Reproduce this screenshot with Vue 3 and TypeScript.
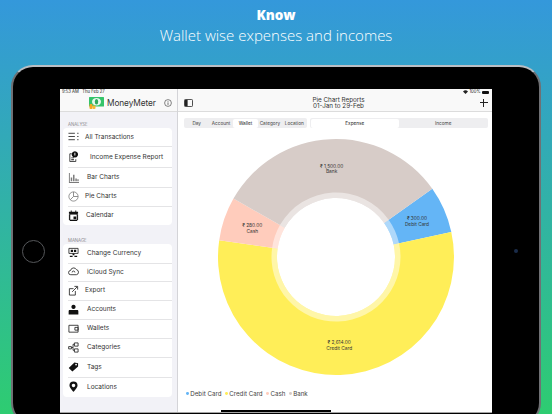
<script setup lang="ts">
import {computed} from 'vue';

interface MenuRow {
  label: string;
  height: number;
  iconWidth: number;
  line?: string;
  solid?: string;
  muted?: boolean;
}

const CX = 158;
const CY = 129;
const OUTER = 118;
const INNER = 59;
const RING = 64.5;
const LABEL_R = 88.5;
const START = -35.3;

const wallets = [
  {name: 'Debit Card', value: 300, amount: '₹ 300.00', color: '#64b5f6'},
  {name: 'Credit Card', value: 2614, amount: '₹ 2,614.00', color: '#ffee58'},
  {name: 'Cash', value: 280, amount: '₹ 280.00', color: '#ffccbc'},
  {name: 'Bank', value: 1500, amount: '₹ 1,500.00', color: '#d7ccc8'},
];

function point(r: number, deg: number) {
  const a = (deg * Math.PI) / 180;
  return `${(CX + r * Math.cos(a)).toFixed(2)} ${(CY + r * Math.sin(a)).toFixed(2)}`;
}

function arc(r1: number, r2: number, from: number, to: number) {
  const large = to - from > 180 ? 1 : 0;
  return `M${point(r2, from)}A${r2} ${r2} 0 ${large} 1 ${point(r2, to)}L${point(r1, to)}A${r1} ${r1} 0 ${large} 0 ${point(r1, from)}Z`;
}

const slices = computed(() => {
  const total = wallets.reduce((sum, w) => sum + w.value, 0);
  let angle = START;
  return wallets.map(w => {
    const from = angle;
    const to = angle + (w.value / total) * 360;
    angle = to;
    const mid = ((from + to) / 2) * Math.PI / 180;
    return {
      ...w,
      d: arc(INNER, OUTER, from, to),
      ring: arc(INNER, RING, from, to),
      x: CX + LABEL_R * Math.cos(mid),
      y: CY + LABEL_R * Math.sin(mid),
    };
  });
});

const analyse: MenuRow[] = [
  {label: 'All Transactions', height: 19, iconWidth: 17, line: 'M.5 2.5h7M.5 6h7M.5 9.5h7M10 2.5h1.5M10 6h1.5M10 9.5h1.5'},
  {label: 'Income Expense Report', height: 21, iconWidth: 22, line: 'M2 3v8.5h6.5V9M2 3h2', solid: 'M7.5.3a3.4 3.4 0 1 0 .01 0zM7 2h1v3H7zM3.5 7h3v1h-3zM3.5 9h3v1h-3z'},
  {label: 'Bar Charts', height: 20, iconWidth: 19, muted: true, solid: 'M1 1h1v10h10v1H1zM3 6h1.6v4H3zM5.5 3h1.6v7H5.5zM8 7h1.6v3H8zM10.2 8h1.4v2h-1.4z'},
  {label: 'Pie Charts', height: 18.5, iconWidth: 17, muted: true, line: 'M6 1a5 5 0 1 0 .01 0zM6 1v5L2.5 9.5M6 6h5'},
  {label: 'Calendar', height: 18.5, iconWidth: 18, line: 'M2 4h8v7H2z', solid: 'M1 2h10v3H1zM3 .5h1V2H3zM8 .5h1V2H8zM1 4h1v8H1zM10 4h1v8h-1zM1 11h10v1H1zM6 7h3v3H6z'},
];

const manage: MenuRow[] = [
  {label: 'Change Currency', height: 19.5, iconWidth: 19, line: 'M1 1.5h10v5.5H1z', solid: 'M3 3h2.5v2.5H3zM6.5 3H9v2.5H6.5zM5 7h2v2H5zM2 9.5h3V11H2zM7 9.5h3V11H7z'},
  {label: 'iCloud Sync', height: 18.5, iconWidth: 19, line: 'M3 9.5a2.3 2.3 0 0 1-.2-4.6A3.4 3.4 0 0 1 9.2 4a2.8 2.8 0 0 1 0 5.5zM4.5 7a1.5 1.5 0 0 1 3 0'},
  {label: 'Export', height: 18.5, iconWidth: 17, line: 'M8 6.5V11H1.5V4H6M4.5 7.5 10 2M7 1.5h3.5V5'},
  {label: 'Accounts', height: 19, iconWidth: 19, solid: 'M6 .8a2.3 2.3 0 1 0 .01 0zM2 6.5h8c.8 0 1.3.6 1.3 1.4v3.6H.7V7.9c0-.8.5-1.4 1.3-1.4z'},
  {label: 'Wallets', height: 19, iconWidth: 19, line: 'M1 2.5h10v7.5H1zM7.5 4.8H11v3H7.5z'},
  {label: 'Categories', height: 19.5, iconWidth: 19, line: 'M.7 5h3v2.5h-3zM7 1h4v3.5H7zM7 7.5h4V11H7zM3.7 6H5.5V2.5H7M5.5 6v3H7'},
  {label: 'Tags', height: 19.5, iconWidth: 19, solid: 'M7 1.5 11 2.5 11 6 4.8 11.5 .8 7.5ZM8.8 3a.9.9 0 1 0 .01 0z'},
  {label: 'Locations', height: 19, iconWidth: 19, solid: 'M6 .5a4.4 4.4 0 0 1 4.4 4.4C10.4 7.5 6 11.8 6 11.8S1.6 7.5 1.6 4.900A4.400 4.400 0 0 1 6 .5zM6 3a1.900 1.900 0 1 0 .01 0z'},
];

const periods = ['Day', 'Account', 'Wallet', 'Category', 'Location'];
</script>

<template>
  <div class="page">
    <header class="promo">
      <h1>Know</h1>
      <p>Wallet wise expenses and incomes</p>
    </header>

    <div class="device">
      <span class="home-button"></span>
      <span class="camera"></span>

      <div class="screen">
        <aside class="sidebar">
          <div class="status">9:53 AM&nbsp;&nbsp;&nbsp;Thu Feb 27</div>
          <div class="side-nav">
            <svg class="logo" viewBox="0 0 15 12">
              <rect y="0" width="15" height="9.500" rx="0.500" fill="#35c46a"/>
              <ellipse cx="7.500" cy="4.700" rx="4.500" ry="3.800" fill="#e8f8ec"/>
              <ellipse cx="7.500" cy="4.700" rx="1.700" ry="2.800" fill="#2fa85c"/>
              <rect x="0.500" y="7" width="3" height="5" rx="1" fill="#f5a623"/>
              <rect x="3.500" y="8.500" width="3" height="3.500" rx="1" fill="#f7b733"/>
            </svg>
            <span class="brand">MoneyMeter</span>
            <svg class="info" viewBox="0 0 8 8">
              <circle cx="4" cy="4" r="3.400" fill="none" stroke="#333" stroke-width="0.600"/>
              <path d="M4 3.400v2.500M4 2v.7" stroke="#333" stroke-width="0.700"/>
            </svg>
          </div>

          <div class="section-label first">ANALYSE</div>
          <ul class="card">
            <li v-for="row in analyse" :key="row.label" :style="{height: row.height + 'px'}">
              <span class="row-icon" :style="{width: row.iconWidth + 'px'}">
                <svg viewBox="0 0 12 12" :class="{muted: row.muted}">
                  <path v-if="row.line" class="stroke" :d="row.line"/>
                  <path v-if="row.solid" class="fill" :d="row.solid"/>
                </svg>
              </span>
              <span>{{ row.label }}</span>
            </li>
          </ul>

          <div class="section-label">MANAGE</div>
          <ul class="card">
            <li v-for="row in manage" :key="row.label" :style="{height: row.height + 'px'}">
              <span class="row-icon" :style="{width: row.iconWidth + 'px'}">
                <svg viewBox="0 0 12 12">
                  <path v-if="row.line" class="stroke" :d="row.line"/>
                  <path v-if="row.solid" class="fill" :d="row.solid"/>
                </svg>
              </span>
              <span>{{ row.label }}</span>
            </li>
          </ul>
        </aside>

        <main class="main">
          <div class="status right">
            <svg viewBox="0 0 8 6" class="wifi"><path d="M4 6 0 2a5.700 5.700 0 0 1 8 0z" fill="#222"/></svg>
            <span>100%</span>
            <i class="battery"></i>
          </div>
          <div class="main-nav">
            <svg class="panel-icon" viewBox="0 0 10 9">
              <rect x="0.500" y="0.500" width="9" height="8" rx="1" fill="none" stroke="#222" stroke-width="0.900"/>
              <rect x="1" y="1" width="3" height="7" fill="#222"/>
            </svg>
            <div class="title">
              <div>Pie Chart Reports</div>
              <div>01-Jan to 29-Feb</div>
            </div>
            <span class="plus"></span>
          </div>

          <div class="filters">
            <div class="segmented five">
              <span v-for="p in periods" :key="p" :class="{active: p === 'Wallet'}">{{ p }}</span>
            </div>
            <div class="segmented two">
              <span class="active">Expense</span>
              <span>Income</span>
            </div>
          </div>

          <svg class="chart" viewBox="0 0 314 258">
            <g v-for="s in slices" :key="s.name">
              <path :d="s.d" :fill="s.color"/>
              <path :d="s.ring" fill="#fff" fill-opacity="0.480"/>
              <text :x="s.x" :y="s.y - 1" text-anchor="middle">{{ s.amount }}</text>
              <text :x="s.x" :y="s.y + 4.600" text-anchor="middle">{{ s.name }}</text>
            </g>
          </svg>

          <div class="legend">
            <span v-for="s in slices" :key="s.name">
              <i :style="{background: s.color}"></i>{{ s.name }}
            </span>
          </div>
          <div class="home-bar"></div>
        </main>
      </div>
    </div>
  </div>
</template>

<style>
html, body {
  margin: 0;
  overflow: hidden;
}
</style>

<style scoped>
.page {
  width: 552px;
  height: 414px;
  overflow: hidden;
  background: linear-gradient(180deg, #3498db 0%, #2ecc71 100%);
  font-family: Inter, "Liberation Sans", sans-serif;
  color: #222;
}

.promo {
  height: 65px;
  padding-top: 6px;
  box-sizing: border-box;
  text-align: center;
  color: #fff;
  font-family: "Open Sans", sans-serif;
}

.promo h1 {
  margin: 0;
  font-size: 13.500px;
  line-height: 18px;
  font-weight: 800;
}

.promo p {
  margin: 1px 0 0;
  font-size: 15px;
  line-height: 20px;
  font-weight: 300;
}

.device {
  position: relative;
  box-sizing: border-box;
  height: 360px;
  margin: 0 11px;
  padding: 22px 47px 0;
  background: #000;
  border: 2px solid #6f7074;
  border-top-color: #b9bec3;
  border-radius: 22px;
}

.home-button {
  position: absolute;
  left: 9px;
  top: 173px;
  width: 21px;
  height: 21px;
  border: 1px solid #55575a;
  border-radius: 50%;
}

.camera {
  position: absolute;
  left: 501px;
  top: 182px;
  width: 4px;
  height: 4px;
  border-radius: 50%;
  background: #1a2c4a;
}

.screen {
  display: flex;
  height: 324px;
  overflow: hidden;
  border-bottom: 1px solid #a5a5a5;
  box-sizing: border-box;
}

.sidebar {
  width: 118px;
  flex: none;
  background: #f2f2f7;
  border-right: 1px solid #d4d4d8;
  box-sizing: border-box;
}

.status {
  height: 6px;
  padding-left: 2px;
  background: #f9f9f9;
  font-size: 4.200px;
  line-height: 6px;
  white-space: nowrap;
}

.status.right {
  display: flex;
  align-items: center;
  justify-content: flex-end;
  gap: 1.500px;
  padding-right: 3px;
}

.wifi {
  width: 5px;
  height: 4px;
}

.battery {
  width: 7px;
  height: 3px;
  background: #111;
  border-radius: 1px;
}

.side-nav {
  display: flex;
  align-items: center;
  height: 16px;
  padding: 0 5px 0 29px;
  background: #f9f9f9;
  border-bottom: 1px solid #dcdcdc;
}

.logo {
  width: 15px;
  height: 12px;
  flex: none;
}

.brand {
  margin-left: 3px;
  font-size: 8.300px;
  letter-spacing: -0.100px;
  flex: 1;
  color: #333;
}

.info {
  width: 8px;
  height: 8px;
}

.section-label {
  padding: 0 0 0 8px;
  margin-top: 13px;
  height: 5px;
  font-size: 4.300px;
  line-height: 5px;
  color: #8a8a8e;
}

.section-label.first {
  margin-top: 10px;
}

.card {
  list-style: none;
  margin: 1px 5px 0 3px;
  padding: 0 0 0 5px;
  background: #fff;
  border-radius: 4px;
}

.card li {
  display: flex;
  align-items: center;
  box-sizing: border-box;
  padding-bottom: 1px;
  font-size: 6.500px;
  color: #333;
  white-space: nowrap;
  border-bottom: 0.500px solid #e4e4e6;
}

.card li:last-child {
  border-bottom: 0;
}

.row-icon {
  display: flex;
  flex: none;
  align-items: center;
}

.row-icon svg {
  width: 11px;
  height: 11px;
}

.stroke {
  fill: none;
  stroke: #222;
  stroke-width: 0.900;
}

.fill {
  fill: #111;
  fill-rule: evenodd;
}

.muted .stroke {
  stroke: #7a7a7a;
}

.muted .fill {
  fill: #7a7a7a;
}

.main {
  position: relative;
  flex: 1;
  min-width: 0;
  background: #fff;
}

.main-nav {
  display: flex;
  align-items: center;
  justify-content: space-between;
  height: 16px;
  padding: 0 4px 0 6px;
  background: #f9f9f9;
  border-bottom: 1px solid #dcdcdc;
}

.panel-icon {
  width: 9px;
  height: 8px;
}

.title {
  font-size: 6.300px;
  line-height: 6.500px;
  text-align: center;
  color: #333;
  margin-left: 4px;
}

.plus {
  position: relative;
  width: 8px;
  height: 8px;
  background:
    linear-gradient(#222, #222) center / 8px 1.400px no-repeat,
    linear-gradient(#222, #222) center / 1.400px 8px no-repeat;
}

.filters {
  display: flex;
  gap: 3px;
  padding: 6px 4px 0 6px;
}

.segmented {
  display: grid;
  height: 10px;
  padding: 0.500px;
  box-sizing: border-box;
  border-radius: 2px;
  background: #eeeef0;
  font-size: 4.700px;
  line-height: 9px;
  text-align: center;
  color: #444;
}

.segmented.five {
  width: 123px;
  grid-template-columns: repeat(5, 1fr);
}

.segmented.two {
  flex: 1;
  grid-template-columns: 1fr 1fr;
}

.segmented .active {
  background: #fff;
  border-radius: 2px;
  color: #222;
}

.chart {
  display: block;
  width: 314px;
  height: 258px;
  margin-top: 0;
}

.chart text {
  font-size: 4.800px;
  fill: #333;
}

.legend {
  display: flex;
  gap: 3.500px;
  margin-top: 4px;
  padding-left: 8px;
  font-size: 6.200px;
  line-height: 8px;
  color: #444;
}

.legend i {
  display: inline-block;
  width: 2.800px;
  height: 2.800px;
  margin-right: 1.500px;
  border-radius: 50%;
  vertical-align: 1px;
}

.home-bar {
  position: absolute;
  left: 43px;
  bottom: 0.500px;
  width: 110px;
  height: 2px;
  background: #000;
}
</style>
